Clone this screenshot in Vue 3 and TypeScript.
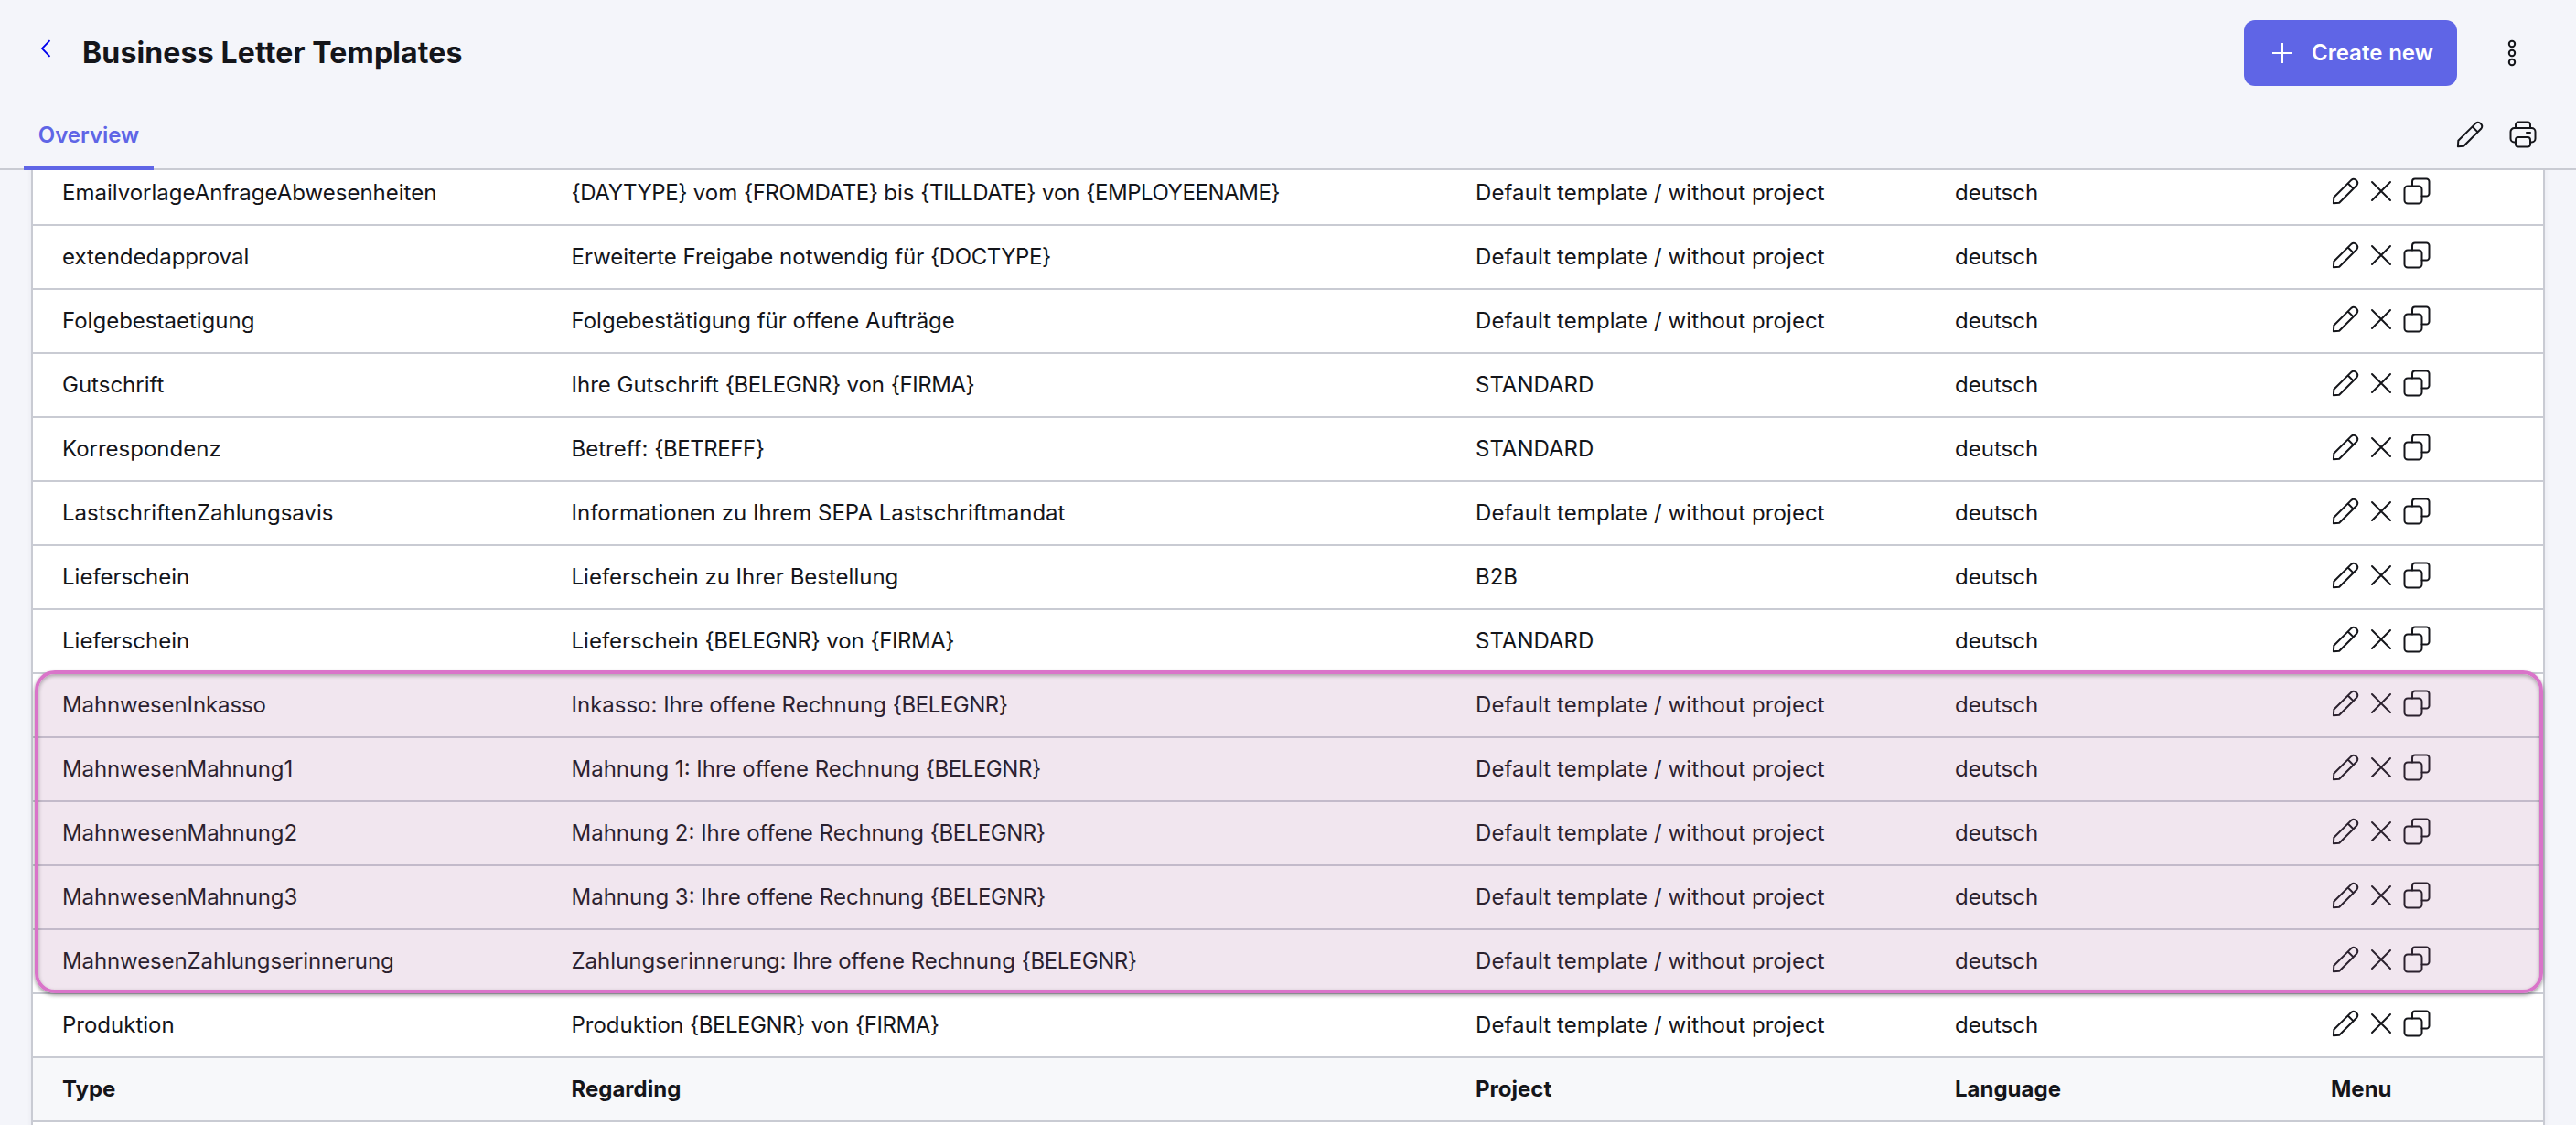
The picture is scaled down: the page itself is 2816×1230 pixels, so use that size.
<script setup lang="ts">
interface Template {
  type: string
  regarding: string
  project: string
  language: string
}

const noProject = 'Default template / without project'

const make = (type: string, regarding: string, project: string = noProject): Template => ({
  type,
  regarding,
  project,
  language: 'deutsch',
})

const templates: Template[] = [
  make('EmailvorlageAnfrageAbwesenheiten', '{DAYTYPE} vom {FROMDATE} bis {TILLDATE} von {EMPLOYEENAME}'),
  make('extendedapproval', 'Erweiterte Freigabe notwendig für {DOCTYPE}'),
  make('Folgebestaetigung', 'Folgebestätigung für offene Aufträge'),
  make('Gutschrift', 'Ihre Gutschrift {BELEGNR} von {FIRMA}', 'STANDARD'),
  make('Korrespondenz', 'Betreff: {BETREFF}', 'STANDARD'),
  make('LastschriftenZahlungsavis', 'Informationen zu Ihrem SEPA Lastschriftmandat'),
  make('Lieferschein', 'Lieferschein zu Ihrer Bestellung', 'B2B'),
  make('Lieferschein', 'Lieferschein {BELEGNR} von {FIRMA}', 'STANDARD'),
  make('MahnwesenInkasso', 'Inkasso: Ihre offene Rechnung {BELEGNR}'),
  make('MahnwesenMahnung1', 'Mahnung 1: Ihre offene Rechnung {BELEGNR}'),
  make('MahnwesenMahnung2', 'Mahnung 2: Ihre offene Rechnung {BELEGNR}'),
  make('MahnwesenMahnung3', 'Mahnung 3: Ihre offene Rechnung {BELEGNR}'),
  make('MahnwesenZahlungserinnerung', 'Zahlungserinnerung: Ihre offene Rechnung {BELEGNR}'),
  make('Produktion', 'Produktion {BELEGNR} von {FIRMA}'),
]

const columns: string[] = ['Type', 'Regarding', 'Project', 'Language', 'Menu']

// Splits a subject line so that {PLACEHOLDERS} can be set a little tighter.
const parts = (s: string): string[] => s.split(/(\{[A-Z]+\})/).filter((p) => p !== '')
const isDunning = (t: Template): boolean => t.type.startsWith('Mahnwesen')
</script>

<template>
  <div class="page">
    <header class="topbar">
      <a class="back" href="#" aria-label="Back">
        <svg width="12" height="20" viewBox="0 0 12 20"><path d="M10.500 1.200 2 10l8.500 8.800" /></svg>
      </a>
      <h1>Business Letter Templates</h1>
      <button class="create" type="button">
        <svg width="24" height="24" viewBox="0 0 24 24"><path d="M12 1v22M1 12h22" /></svg>
        <span>Create new</span>
      </button>
      <button class="more" type="button" aria-label="More">
        <svg width="12" height="32" viewBox="0 0 12 32">
          <circle cx="6" cy="6" r="3.200" />
          <circle cx="6" cy="16" r="3.200" />
          <circle cx="6" cy="26" r="3.200" />
        </svg>
      </button>
    </header>

    <nav class="tabs">
      <a class="tab" href="#">Overview</a>
      <div class="tools">
        <svg class="icon" width="32" height="32" viewBox="0 0 32 32">
          <path d="M2.900 29.200 3.300 22.700 22.300 3.900a4.200 4.200 0 0 1 5.900 5.900L9.200 28.700ZM18.700 7.500l5.900 5.900" />
        </svg>
        <svg class="icon" width="32" height="32" viewBox="0 0 32 32">
          <path d="M8 9V5.500a3 3 0 0 1 3-3h10a3 3 0 0 1 3 3V9" />
          <path d="M8 24.500H6.500a4 4 0 0 1-4-4V13a4 4 0 0 1 4-4h19a4 4 0 0 1 4 4v7.500a4 4 0 0 1-4 4H24" />
          <rect x="8" y="19" width="16" height="10.500" rx="3" />
          <path d="M20 14h4" />
        </svg>
      </div>
    </nav>

    <main class="scroller">
      <div class="table">
        <div v-for="(t, i) in templates" :key="i" class="row" :class="{ dunning: isDunning(t) }">
          <span>{{ t.type }}</span>
          <span><span v-for="(p, k) in parts(t.regarding)" :key="k" :class="{ placeholder: p.startsWith('{') }">{{ p }}</span></span>
          <span :class="{ unassigned: t.project === noProject }">{{ t.project }}</span>
          <span>{{ t.language }}</span>
          <span class="actions">
            <svg class="icon" width="32" height="32" viewBox="0 0 32 32">
              <path d="M2.900 29.200 3.300 22.700 22.300 3.900a4.200 4.200 0 0 1 5.900 5.900L9.200 28.700ZM18.700 7.500l5.900 5.900" />
            </svg>
            <svg class="icon" width="32" height="32" viewBox="0 0 32 32">
              <path d="M6 6l20 20M26 6 6 26" />
            </svg>
            <svg class="icon" width="32" height="32" viewBox="0 0 32 32">
              <rect x="2.500" y="10.500" width="19" height="19" rx="3.500" />
              <path d="M11 10.500V5.500a3 3 0 0 1 3-3h12.500a3 3 0 0 1 3 3V18.500a3 3 0 0 1-3 3H21.500" />
            </svg>
          </span>
        </div>
        <div class="row foot">
          <span v-for="c in columns" :key="c">{{ c }}</span>
        </div>
        <div class="row"></div>
        <div class="highlight"></div>
      </div>
    </main>
  </div>
</template>

<style>
body {
  background: #f4f5fa;
}
</style>

<style scoped>
.page {
  display: flex;
  flex-direction: column;
  height: 1230px;
  overflow: hidden;
  background: #f4f5fa;
  color: #14151a;
  font: 400 24px/32px Inter, sans-serif;
}

svg {
  display: block;
  flex: none;
  fill: none;
  stroke: currentColor;
  stroke-width: 2;
}

button {
  border: 0;
  background: none;
  color: inherit;
  font: inherit;
  padding: 0;
}

.icon {
  stroke-linecap: round;
  stroke-linejoin: round;
}

.topbar {
  display: flex;
  align-items: center;
  height: 116px;
  box-sizing: border-box;
  padding: 0 64px 0 44px;
}

.back {
  color: #0000ee;
  margin: 0 34px 10px 0;
}

.back svg {
  stroke-width: 1.8;
}

h1 {
  flex: 1;
  margin: 0;
  font-size: 32px;
  line-height: 40px;
  font-weight: 700;
  letter-spacing: 0.15px;
}

.create {
  display: flex;
  align-items: center;
  gap: 20px;
  width: 233px;
  height: 72px;
  box-sizing: border-box;
  padding-left: 30px;
  border-radius: 12px;
  background: #5f65e6;
  color: #fff;
  font-weight: 600;
  word-spacing: 0.8px;
}

.more {
  margin-left: 54px;
}

.tabs {
  display: flex;
  align-items: flex-start;
  justify-content: space-between;
  height: 70px;
  box-sizing: border-box;
  flex: none;
  padding: 0 42px 0 26px;
  border-bottom: 2px solid #c9cbd3;
}

.tab {
  position: relative;
  z-index: 1;
  height: 70px;
  width: 142px;
  box-sizing: border-box;
  padding-top: 16px;
  border-bottom: 4px solid #5f65e6;
  color: #5f65e6;
  font-weight: 600;
  text-align: center;
  text-decoration: none;
}

.tools {
  display: flex;
  gap: 26px;
  padding-top: 15px;
}

.scroller {
  flex: 1;
  overflow: hidden;
  padding: 0 34px;
}

.table {
  position: relative;
  margin-top: -9px;
  background: #fff;
  border: 2px solid #c9cbd3;
  border-width: 0 2px;
  box-shadow: 0 0 6px rgba(30, 30, 60, 0.06);
}

.row {
  display: grid;
  grid-template-columns: 556.5px 988.5px 524px 411px 1fr;
  align-items: center;
  height: 70px;
  box-sizing: border-box;
  padding-left: 32px;
  border-bottom: 2px solid #c9cbd3;
  white-space: nowrap;
}

.placeholder {
  letter-spacing: -0.45px;
}

.unassigned {
  letter-spacing: 0.1px;
}

.dunning > span:nth-child(1) {
  letter-spacing: -0.11px;
}

.actions {
  display: flex;
  gap: 7px;
  padding-bottom: 4px;
}

.foot {
  background: #f7f8fa;
  font-weight: 700;
}

.highlight {
  position: absolute;
  left: 2px;
  right: 0;
  top: 556px;
  height: 353px;
  box-sizing: border-box;
  border: 4px solid #d974c9;
  border-radius: 22px;
  background: rgba(168, 100, 156, 0.16);
  background-clip: padding-box;
  box-shadow: 0 2px 4px rgba(0, 0, 0, 0.42), inset 0 2px 4px rgba(0, 0, 0, 0.3);
}
</style>
